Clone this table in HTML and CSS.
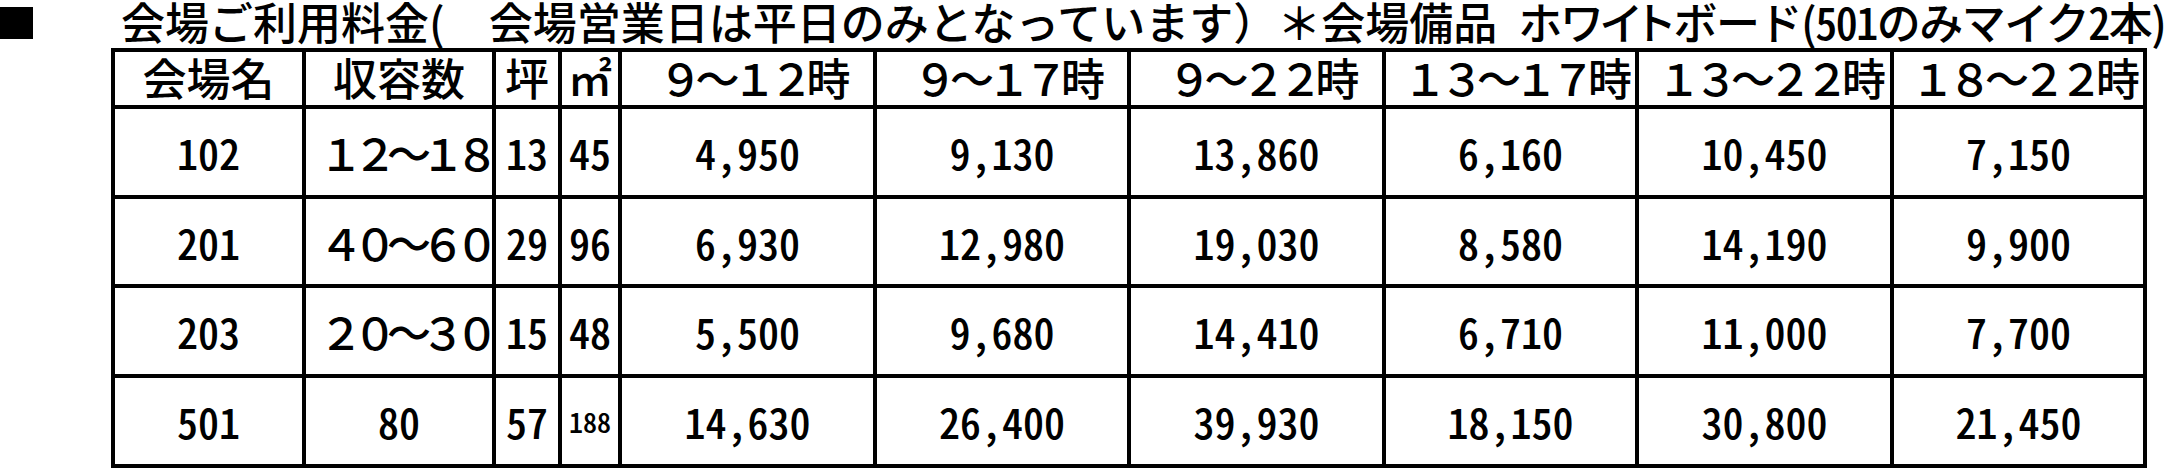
FILE: index.html
```html
<!DOCTYPE html>
<html lang="ja">
<head>
<meta charset="utf-8">
<title>会場ご利用料金</title>
<link rel="stylesheet" href="styles.css">
</head>
<body>
<div class="page">
  <div class="heading">
    <span class="mark"></span>
    <h1 class="title">会場ご利用料金(　会場営業日は平日のみとなっています）＊会場備品&ensp;<span class="prop">ホワイト</span><span class="tail">ボード(<span class="hw">501</span>のみマイク<span class="hw">2</span>本)</span></h1>
  </div>
  <table class="fees">
    <colgroup>
      <col class="c-name">
      <col class="c-cap">
      <col class="c-tsubo">
      <col class="c-m2">
      <col class="c-a">
      <col class="c-b">
      <col class="c-a">
      <col class="c-c">
      <col class="c-a">
      <col class="c-c">
    </colgroup>
    <thead>
      <tr>
        <th>会場名</th>
        <th>収容数</th>
        <th>坪</th>
        <th>㎡</th>
        <th class="time">９～１２時</th>
        <th class="time">９～１７時</th>
        <th class="time">９～２２時</th>
        <th class="time">１３～１７時</th>
        <th class="time">１３～２２時</th>
        <th class="time">１８～２２時</th>
      </tr>
    </thead>
    <tbody>
      <tr>
        <td>102</td><td class="wide">１２～１８</td><td>13</td><td>45</td>
        <td>4,950</td><td>9,130</td><td>13,860</td><td>6,160</td><td>10,450</td><td>7,150</td>
      </tr>
      <tr class="short">
        <td>201</td><td class="wide">４０～６０</td><td>29</td><td>96</td>
        <td>6,930</td><td>12,980</td><td>19,030</td><td>8,580</td><td>14,190</td><td>9,900</td>
      </tr>
      <tr>
        <td>203</td><td class="wide">２０～３０</td><td>15</td><td>48</td>
        <td>5,500</td><td>9,680</td><td>14,410</td><td>6,710</td><td>11,000</td><td>7,700</td>
      </tr>
      <tr>
        <td>501</td><td>80</td><td>57</td><td class="small">188</td>
        <td>14,630</td><td>26,400</td><td>39,930</td><td>18,150</td><td>30,800</td><td>21,450</td>
      </tr>
    </tbody>
  </table>
</div>
</body>
</html>
```

FILE: styles.css
```css
* {
  box-sizing: border-box;
}

html,
body {
  margin: 0;
  padding: 0;
  background: #ffffff;
  overflow: hidden;
}

body {
  font-family: "Noto Sans CJK JP", "Noto Sans", sans-serif;
  font-weight: 500;
  color: #000000;
}

.page {
  width: 2177px;
}

.heading {
  display: flex;
  align-items: flex-start;
  height: 48px;
}

.mark {
  flex: none;
  width: 33px;
  height: 32px;
  margin-top: 7px;
  background: #000000;
}

.title {
  margin: -1px 0 0 88px;
  font-size: 44px;
  font-weight: 500;
  line-height: 1;
  white-space: nowrap;
}

.prop {
  font-feature-settings: "palt";
}

.tail {
  letter-spacing: -1.5px;
}

.hw {
  font-feature-settings: "hwid";
}

.fees {
  margin-left: 111px;
  width: 2036px;
  table-layout: fixed;
  border-collapse: separate;
  border-spacing: 0;
  border-top: 4px solid #000000;
  border-left: 4px solid #000000;
}

.c-name { width: 191px; }
.c-cap { width: 190px; }
.c-tsubo { width: 66px; }
.c-m2 { width: 60px; }
.c-a { width: 255px; }
.c-b { width: 254px; }
.c-c { width: 253px; }

.fees th,
.fees td {
  padding: 0;
  border-right: 4px solid #000000;
  border-bottom: 4px solid #000000;
  text-align: center;
  vertical-align: middle;
  white-space: nowrap;
  line-height: 1;
  font-weight: 500;
}

.fees th {
  height: 57px;
  font-size: 44px;
  padding-bottom: 4px;
}

.fees th.time {
  letter-spacing: -7px;
  text-indent: 7px;
}

.fees td {
  height: 90px;
  font-size: 42px;
  font-feature-settings: "hwid";
}

.fees tr.short td {
  height: 89px;
}

.fees td.wide {
  font-size: 44px;
  font-feature-settings: normal;
  letter-spacing: -10px;
  text-indent: 10px;
}

.fees td.small {
  font-size: 28px;
}
```
